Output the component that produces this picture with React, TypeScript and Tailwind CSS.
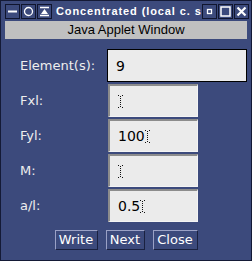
const font = { fontFamily: '"DejaVu Sans", Verdana, sans-serif' };

function TitleButton({ children }: { children: React.ReactNode }) {
  return (
    <div className="w-[15px] h-[15px] border border-[#10152e] bg-[#3c4a7c] flex items-center justify-center">
      <svg width="11" height="11" viewBox="0 0 11 11">
        {children}
      </svg>
    </div>
  );
}

function IBeam() {
  return (
    <svg width="5" height="13" viewBox="0 0 5 13" className="shrink-0">
      <path d="M0 0.5h1M4 0.5h1M0 12.5h1M4 12.5h1" stroke="#111" />
      <path d="M2.5 1v11" stroke="#111" strokeDasharray="1 1" />
    </svg>
  );
}

function Field({ value, wide, focused, cursor }: { value?: string; wide?: boolean; focused?: boolean; cursor?: boolean }) {
  return (
    <div
      className={
        "h-[33px] bg-[#ebebeb] flex items-center pl-[8px] text-[14px] text-black " +
        (wide ? "w-[140px] " : "w-[90px] ml-[1px] ") +
        (focused
          ? "border border-black"
          : "border-t-2 border-l-2 border-t-[#8c8c8c] border-l-[#8c8c8c] border-b border-r border-b-[#f4f4f4] border-r-[#f4f4f4]")
      }
    >
      {value && <span className="leading-none">{value}</span>}
      {cursor && <IBeam />}
    </div>
  );
}

function Row({ label, children }: { label: string; children: React.ReactNode }) {
  return (
    <div className="flex items-center h-[33px]">
      <div className="w-[106px] shrink-0 pl-[19px] text-[13px] text-[#eeeeee] whitespace-nowrap">{label}</div>
      {children}
    </div>
  );
}

function Btn({ label, w }: { label: string; w: string }) {
  return (
    <div className={"h-[20px] flex items-center justify-center text-[13px] text-white bg-[#3c4a7c] border border-t-[#9aa1c6] border-l-[#9aa1c6] border-b-[#1a2140] border-r-[#1a2140] " + w}>
      {label}
    </div>
  );
}

export default function App() {
  return (
    <div style={font} className="w-[252px] h-[261px] bg-[#3c4a7c] border border-[#141a36] flex flex-col overflow-hidden">
      <div className="h-[20px] flex items-center pl-[4px] pr-[2px] gap-[1px]">
        <TitleButton>
          <path d="M1 5.5h9" stroke="white" strokeWidth="2" />
        </TitleButton>
        <TitleButton>
          <circle cx="5.5" cy="5.5" r="4" fill="none" stroke="white" strokeWidth="1.3" />
        </TitleButton>
        <TitleButton>
          <path d="M1 1.5h9M1 9.5h9" stroke="white" strokeWidth="1.5" />
          <path d="M5.5 3L9 8H2z" fill="white" />
        </TitleButton>
        <div
          style={{ fontFamily: '"Liberation Sans", Arial, sans-serif' }}
          className="flex-1 overflow-hidden whitespace-nowrap text-white font-bold text-[11px] tracking-[0.9px] pl-[3px]"
        >
          Concentrated (local c. system)
        </div>
        <TitleButton>
          <rect x="3.5" y="3.5" width="4" height="4" fill="none" stroke="white" strokeWidth="1.3" />
        </TitleButton>
        <TitleButton>
          <rect x="1" y="1" width="9" height="9" fill="none" stroke="white" strokeWidth="1.5" />
        </TitleButton>
        <TitleButton>
          <path d="M1.5 1.5l8 8M9.5 1.5l-8 8" stroke="white" strokeWidth="2.2" />
        </TitleButton>
      </div>
      <div
        style={{ fontFamily: '"Liberation Sans", Arial, sans-serif' }}
        className="mx-[4px] h-[18px] bg-[#c0c0c0] flex items-center justify-center text-[13px] text-black"
      >
        Java Applet Window
      </div>
      <div className="flex flex-col gap-[2px] pt-[10px]">
        <Row label="Element(s):">
          <Field value="9" wide focused />
        </Row>
        <Row label="Fxl:">
          <Field cursor />
        </Row>
        <Row label="Fyl:">
          <Field value="100" cursor />
        </Row>
        <Row label="M:">
          <Field cursor />
        </Row>
        <Row label="a/l:">
          <Field value="0.5" cursor />
        </Row>
      </div>
      <div className="flex justify-center gap-[8px] mt-[8px]">
        <Btn label="Write" w="w-[43px]" />
        <Btn label="Next" w="w-[39px]" />
        <Btn label="Close" w="w-[45px]" />
      </div>
    </div>
  );
}
